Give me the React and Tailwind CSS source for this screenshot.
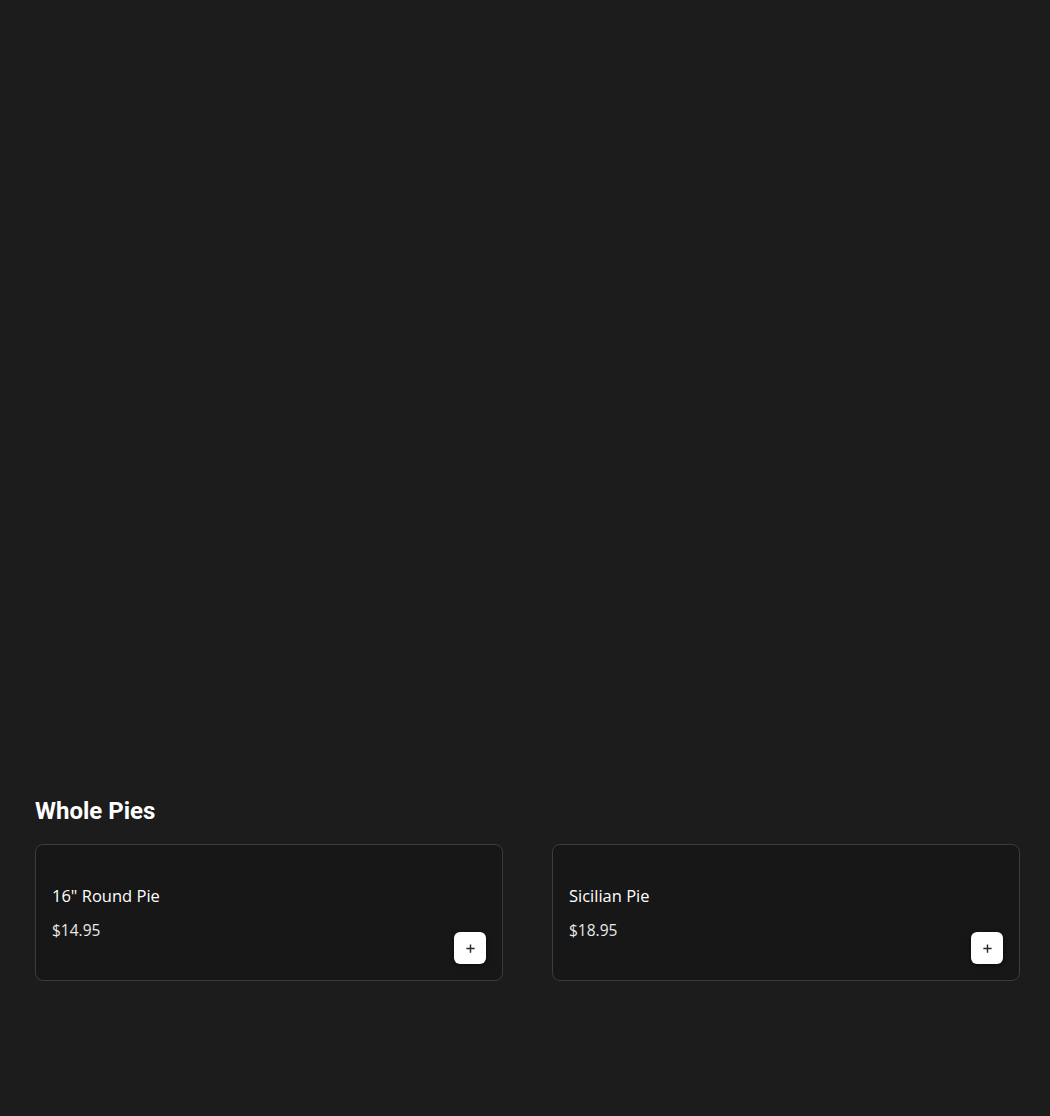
const items = [
  { name: '16" Round Pie', price: "$14.95" },
  { name: "Sicilian Pie", price: "$18.95" },
]

const PlusIcon = () => (
  <svg viewBox="0 0 12 12" className="w-[11px] h-[11px]" fill="none" stroke="#2a2a2a" strokeWidth="1.6">
    <path d="M6 1.5v9M1.5 6h9" />
  </svg>
)

const ItemCard = ({ item }) => (
  <div className="h-[137px] rounded-lg border border-[#3c3c3c] bg-[#171717] px-4 pt-[41px] flex flex-col relative">
    <div className="text-[16.5px] leading-5 text-white font-medium">{item.name}</div>
    <div className="mt-[14px] text-[15.5px] leading-5 text-[#e9e9e9]">{item.price}</div>
    <button className="absolute right-4 bottom-4 w-8 h-8 rounded-md bg-white flex items-center justify-center shadow-[0_1px_4px_rgba(0,0,0,0.6)]">
      <PlusIcon />
    </button>
  </div>
)

export default function App() {
  return (
    <div className="min-h-[1116px] bg-[#1c1c1c] pt-[795px] pl-[35px] pr-[30px]" style={{ fontFamily: '"Open Sans", sans-serif' }}>
      <h2 className="text-[24px] leading-8 font-bold text-white" style={{ fontFamily: "Roboto, Arial, sans-serif" }}>
        Whole Pies
      </h2>
      <div className="mt-[17px] grid grid-cols-2 gap-[49px]">
        {items.map((it) => (
          <ItemCard key={it.name} item={it} />
        ))}
      </div>
    </div>
  )
}
